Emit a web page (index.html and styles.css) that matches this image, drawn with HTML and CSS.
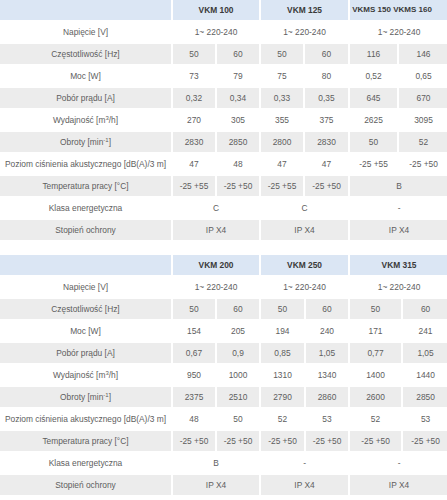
FILE: index.html
```html
<!DOCTYPE html>
<html lang="pl">
<head>
<meta charset="utf-8">
<title>Dane techniczne</title>
<link rel="stylesheet" href="styles.css">
</head>
<body>
<div class="sheets">
<table class="spec spec-a">
  <colgroup>
    <col class="c-label"><col class="a2"><col class="a3"><col class="a4"><col class="a5"><col class="a6"><col class="a7">
  </colgroup>
  <thead>
    <tr class="head"><th></th><th colspan="2">VKM 100</th><th colspan="2">VKM 125</th><th colspan="2" class="tight">VKMS 150 VKMS 160</th></tr>
  </thead>
  <tbody>
    <tr><td>Napięcie [V]</td><td colspan="2">1~ 220-240</td><td colspan="2">1~ 220-240</td><td colspan="2">1~ 220-240</td></tr>
    <tr class="alt"><td>Częstotliwość [Hz]</td><td>50</td><td>60</td><td>50</td><td>60</td><td>116</td><td>146</td></tr>
    <tr><td>Moc [W]</td><td>73</td><td>79</td><td>75</td><td>80</td><td>0,52</td><td>0,65</td></tr>
    <tr class="alt"><td>Pobór prądu [A]</td><td>0,32</td><td>0,34</td><td>0,33</td><td>0,35</td><td>645</td><td>670</td></tr>
    <tr><td>Wydajność [m<sup>3</sup>/h]</td><td>270</td><td>305</td><td>355</td><td>375</td><td>2625</td><td>3095</td></tr>
    <tr class="alt"><td>Obroty [min<sup>-1</sup>]</td><td>2830</td><td>2850</td><td>2800</td><td>2830</td><td>50</td><td>52</td></tr>
    <tr><td>Poziom ciśnienia akustycznego [dB(A)/3 m]</td><td>47</td><td>48</td><td>47</td><td>47</td><td>-25 +55</td><td>-25 +50</td></tr>
    <tr class="alt"><td>Temperatura pracy [°C]</td><td>-25 +55</td><td>-25 +50</td><td>-25 +55</td><td>-25 +50</td><td colspan="2">B</td></tr>
    <tr><td>Klasa energetyczna</td><td colspan="2">C</td><td colspan="2">C</td><td colspan="2">-</td></tr>
    <tr class="alt"><td>Stopień ochrony</td><td colspan="2">IP X4</td><td colspan="2">IP X4</td><td colspan="2">IP X4</td></tr>
  </tbody>
</table>

<table class="spec spec-b">
  <colgroup>
    <col class="c-label"><col class="b2"><col class="b3"><col class="b4"><col class="b5"><col class="b6"><col class="b7">
  </colgroup>
  <thead>
    <tr class="head"><th></th><th colspan="2">VKM 200</th><th colspan="2">VKM 250</th><th colspan="2">VKM 315</th></tr>
  </thead>
  <tbody>
    <tr><td>Napięcie [V]</td><td colspan="2">1~ 220-240</td><td colspan="2">1~ 220-240</td><td colspan="2">1~ 220-240</td></tr>
    <tr class="alt"><td>Częstotliwość [Hz]</td><td>50</td><td>60</td><td>50</td><td>60</td><td>50</td><td>60</td></tr>
    <tr><td>Moc [W]</td><td>154</td><td>205</td><td>194</td><td>240</td><td>171</td><td>241</td></tr>
    <tr class="alt"><td>Pobór prądu [A]</td><td>0,67</td><td>0,9</td><td>0,85</td><td>1,05</td><td>0,77</td><td>1,05</td></tr>
    <tr><td>Wydajność [m<sup>3</sup>/h]</td><td>950</td><td>1000</td><td>1310</td><td>1340</td><td>1400</td><td>1440</td></tr>
    <tr class="alt"><td>Obroty [min<sup>-1</sup>]</td><td>2375</td><td>2510</td><td>2790</td><td>2860</td><td>2600</td><td>2850</td></tr>
    <tr><td>Poziom ciśnienia akustycznego [dB(A)/3 m]</td><td>48</td><td>50</td><td>52</td><td>53</td><td>52</td><td>53</td></tr>
    <tr class="alt"><td>Temperatura pracy [°C]</td><td>-25 +50</td><td>-25 +50</td><td>-25 +50</td><td>-25 +50</td><td>-25 +50</td><td>-25 +50</td></tr>
    <tr><td>Klasa energetyczna</td><td colspan="2">B</td><td colspan="2">-</td><td colspan="2">-</td></tr>
    <tr class="alt"><td>Stopień ochrony</td><td colspan="2">IP X4</td><td colspan="2">IP X4</td><td colspan="2">IP X4</td></tr>
  </tbody>
</table>
</div>
</body>
</html>
```

FILE: styles.css
```css
html, body {
  margin: 0;
  padding: 0;
  background: #ffffff;
  overflow: hidden;
}

.sheets {
  display: flex;
  flex-direction: column;
  gap: 11px;
  margin: -2px -2px 0 -2px;
}

.spec {
  border-collapse: separate;
  border-spacing: 2px;
  table-layout: fixed;
  width: 452px;
  font-family: "Liberation Sans", Arial, sans-serif;
  font-size: 8.4px;
  color: #5e5e5e;
}

.spec th,
.spec td {
  height: 20px;
  padding: 0;
  text-align: center;
  vertical-align: middle;
  white-space: nowrap;
  overflow: hidden;
  line-height: 20px;
}

.spec .head th {
  background: #dbe6f4;
  color: #3a3a3a;
  font-weight: bold;
}

.spec .head th.tight {
  font-size: 8px;
  padding-right: 14px;
}

.spec .alt td {
  background: #ececec;
}

.spec sup {
  font-size: 6px;
  line-height: 0;
  vertical-align: 3px;
}

.c-label { width: 171px; }

.a2 { width: 42px; }
.a3 { width: 42px; }
.a4 { width: 42px; }
.a5 { width: 43px; }
.a6 { width: 47px; }
.a7 { width: 49px; }

.b2 { width: 42px; }
.b3 { width: 42px; }
.b4 { width: 43px; }
.b5 { width: 42px; }
.b6 { width: 51px; }
.b7 { width: 45px; }
```
